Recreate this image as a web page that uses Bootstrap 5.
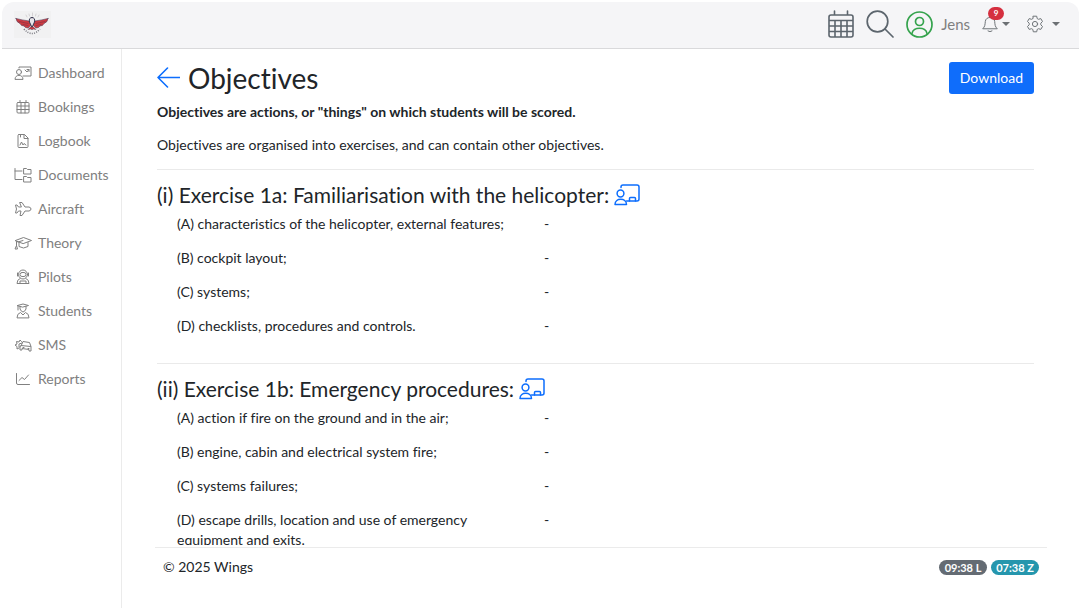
<!DOCTYPE html>
<html lang="en">
<head>
<meta charset="utf-8">
<meta name="viewport" content="width=device-width, initial-scale=1">
<title>Wings – Objectives</title>
<link rel="stylesheet" href="https://cdn.jsdelivr.net/npm/bootstrap@5.3.0/dist/css/bootstrap.min.css">
<style>
body { font-family: Lato, "Open Sans", sans-serif; font-size: 14px; line-height: 20px; color: #212529; background: #fff; font-variant-ligatures: none; }
svg { fill: none; stroke: currentColor; stroke-linecap: round; stroke-linejoin: round; flex: none; }
svg.wings-logo { stroke: none; }
.shell { padding: 2px 1px 0 2px; }
.topbar { background: #f5f5f7; border-bottom: 1px solid #d9d9db; border-radius: 12px 12px 0 0; height: 47px; padding: 0 15px 2px 12px; color: #6c757d; }
.topbar a, .topbar button { color: #6f7478; }
.topbar .dark-icon { color: #5c656d; }
.topbar .user { color: #808080; font-size: 15px; margin-right: 12px; }
.topbar .avatar { color: #35a34d; }
.topbar button { background: none; border: 0; padding: 0; }
.caret { border: 4px solid transparent; border-top-color: #6c7074; border-bottom: 0; }
.alerts { top: -8px; left: 6px; font-size: 8px; line-height: 13px; width: 16px; padding: 0; background: #d52f3f; }
.sidebar { width: 120px; border-right: 1px solid #ebebeb; padding: 12px 0 0 12px; }
.sidebar ul { gap: 10px; }
.sidebar a { color: #808080; font-size: 14px; line-height: 24px; gap: 6px; }
.sidebar svg { width: 18px; height: 16px; }
.content { padding: 13px 45px 0 35px; }
.content h1 { font-size: 28px; line-height: 30px; }
.content h2 { font-size: 21px; line-height: 26px; margin: 12px 0 6px; gap: 5px; }
.content p { margin-bottom: 14px; }
.content .intro { margin: 8px 0 13px; }
.content hr { margin: 0; border-color: #d8d8d8; opacity: .55; }
.content h1, .content h2 { font-weight: 400; }
.btn-download { background: #0f6dfb; color: #fff; border: 0; border-radius: 3px; font-size: 14px; line-height: 20px; padding: 6px 11px; }
.goals { margin: 0 -12px 0 8px; padding-bottom: 13px; }
.goals .row { --bs-gutter-x: 24px; margin: 0 0 14px; }
.footer-bar { margin: 2px 32px 0 33px; border-top: 1px solid #ebebeb; padding: 9px 8px 31px; }
.clock { font-size: 11px; line-height: 15px; padding: 0 5px; min-width: 48px; font-weight: 700; }
.clock-local { background: #646b73; }
.clock-zulu { background: #2596ad; }
</style>
</head>
<body>
<svg width="0" height="0" class="position-absolute" aria-hidden="true">
  <symbol id="i-lesson" viewBox="0 0 26 22">
    <g stroke-width="1.5"><path d="M7 3.500V3q0-2 2-2h14q2 0 2 2v12q0 2-2 2h-10.500"/><circle cx="6.500" cy="9.500" r="3.400"/><path d="M1 20.500c0-7 11.500-7 11.500 0zM15.500 17v-2.500q0-1 1-1h4q1 0 1 1V17"/></g>
  </symbol>
  <symbol id="i-calendar" viewBox="0 0 18 16">
    <path d="M4 3.500h10q1 0 1 1V13q0 1-1 1H4q-1 0-1-1V4.500q0-1 1-1zM3 7h12M3 10.500h12M7 3.500V14M11 3.500V14M6 1.500v2M12 1.500v2"/>
  </symbol>
</svg>

<div class="shell vh-100 d-flex flex-column overflow-hidden">
  <header class="topbar d-flex align-items-center flex-shrink-0">
    <a href="#" class="me-auto d-flex" aria-label="Wings home">
      <svg class="wings-logo" width="37" height="27" viewBox="0 0 37 27">
        <path fill="#f1f1f2" d="M0 0h37v27H0z"/>
        <path d="M12 4l1 2M15 3l.5 2M18.500 2v3M22 3l-.5 2M25 4l-1 2" stroke="#c9c5c8" stroke-width=".7"/>
        <path fill="#cf3a40" stroke="#54405a" stroke-width=".6" d="M2 7.500q6 1.500 13 2.500l2 4-3 3q-3 0-4-2-3 0-4-2.500Q2.500 11.500 2 7.500zM34 7.500q-6 1.500-13 2.500l-2 4 3 3q3 0 4-2 3 0 4-2.500 3.500-1 4-5z"/>
        <path d="M5 10.500l9 2M9 13.500l5 1M31 10.500l-9 2M27 13.500l-5 1" stroke="#7b3448" stroke-width=".6"/>
        <path fill="#e8e6ea" stroke="#373850" d="M18 6.500q-3.500 0-2.500 4.500l2.500 5.500 2.500-5.500q1-4.500-2.500-4.500z"/>
        <path fill="#cf3a40" stroke="#373850" stroke-width=".4" d="M17 15.500l-3 3 3-.5 1 1 1-1 3 .5-3-3-1 1z"/>
        <path d="M10 18q8 9 16 0" stroke="#77777f" stroke-width="1.600" stroke-dasharray="1 1.300" stroke-linecap="butt"/>
      </svg>
    </a>
    <a href="#" class="dark-icon d-flex" aria-label="Calendar">
      <svg width="26" height="28" viewBox="0 0 26 28" stroke-width="1.600"><path d="M3 5h20q2 0 2 2v18q0 2-2 2H3q-2 0-2-2V7q0-2 2-2zM1 10.500h24M1 16h24M1 21.500h24M7 10.500V27M13 10.500V27M19 10.500V27M6.500 1v4M19.500 1v4"/></svg>
    </a>
    <a href="#" class="dark-icon d-flex ms-2 ps-1" aria-label="Search">
      <svg width="28" height="28" viewBox="0 0 28 28" stroke-width="1.700"><circle cx="11.500" cy="11.500" r="10.300"/><path d="M19 19l8 8"/></svg>
    </a>
    <a href="#" class="user d-flex align-items-center text-decoration-none ms-2 ps-1">
      <svg class="avatar me-2" width="27" height="27" viewBox="0 0 27 27" stroke-width="1.700"><circle cx="13.500" cy="13.500" r="12.500"/><circle cx="13.500" cy="10.500" r="4"/><path d="M6 22.500c1-7 14-7 15 0"/></svg>
      Jens
    </a>
    <button type="button" class="d-flex align-items-center position-relative" aria-label="Notifications">
      <svg width="16" height="18" viewBox="0 0 16 18"><path d="M1 13.500c2-2 2-3.500 2.300-7C3.500 4 5.500 2.500 8 2.500s4.500 1.500 4.700 4c.3 3.500.3 5 2.300 7zM8 1v1.500M6 16q2 1.500 4 0"/></svg>
      <span class="badge rounded-pill position-absolute alerts">9</span>
      <span class="caret ms-1"></span>
    </button>
    <button type="button" class="d-flex align-items-center ms-3" aria-label="Settings">
      <svg width="18" height="18" viewBox="0 0 18 18"><circle cx="9" cy="9" r="2.600"/><path d="M7.300 1.200h3.400l.5 2.400 1.300.7 2.300-.7 1.700 2.900-1.700 1.700v1.600l1.700 1.700-1.700 2.900-2.300-.7-1.300.7-.5 2.400H7.300l-.5-2.400-1.300-.7-2.300.7-1.700-2.900 1.700-1.700V8.200L1.500 6.500l1.700-2.900 2.300.7 1.300-.7z"/></svg>
      <span class="caret ms-2 me-1"></span>
    </button>
  </header>

  <div class="d-flex flex-grow-1 overflow-hidden">
    <nav class="sidebar flex-shrink-0" aria-label="Main">
      <ul class="list-unstyled d-flex flex-column mb-0">
        <li><a href="#" class="d-flex align-items-center text-decoration-none"><svg viewBox="0 0 18 16"><path d="M5 3V2h12v9H9M11 5l2 2 2-2.500M13 4.500h2v2M1 14c0-5 8-5 8 0z"/><circle cx="5" cy="7" r="2.500"/></svg>Dashboard</a></li>
        <li><a href="#" class="d-flex align-items-center text-decoration-none"><svg viewBox="0 0 18 16"><use href="#i-calendar"/></svg>Bookings</a></li>
        <li><a href="#" class="d-flex align-items-center text-decoration-none"><svg viewBox="0 0 18 16"><path d="M5 1.500h5.500l3.500 3.500V13.500q0 1-1 1H5q-1 0-1-1v-11q0-1 1-1zM10 1.500V5.500h4M6 12l1.500-3 1.500 3 1-1.500 2 1.500M6.500 2v2"/></svg>Logbook</a></li>
        <li><a href="#" class="d-flex align-items-center text-decoration-none"><svg viewBox="0 0 18 16"><path d="M1 1.500v11h7M1 4h7M10 1.500h2.500l1 1H17v4.500h-7zM10 9.500h2.500l1 1H17V15h-7z"/></svg>Documents</a></li>
        <li><a href="#" class="d-flex align-items-center text-decoration-none"><svg viewBox="0 0 18 16"><path d="M6 1.500h2L11 6h4q2 .5 2 2t-2 2h-4l-3 4.500H6L7 10H4.500L3 12H1.500L2.500 8l-1-4H3l1.500 2H7z"/></svg>Aircraft</a></li>
        <li><a href="#" class="d-flex align-items-center text-decoration-none"><svg viewBox="0 0 18 16"><path d="M1.500 5.500L9.500 2.500l8 3-8 3zM5 7.500v4q4.500 3 9 0v-4M2.500 6.500v4l-1.500 3.500h2.500l-1-3.500M9 5.500l-5 1.500"/></svg>Theory</a></li>
        <li><a href="#" class="d-flex align-items-center text-decoration-none"><svg viewBox="0 0 18 16"><circle cx="9" cy="5.500" r="4.500"/><rect x="6" y="3.500" width="6" height="4" rx="2"/><path d="M3.500 4v3M14.500 4v3M6 9.500q-3 1-3 5h12q0-4-3-5M6 14v-2h6v2"/></svg>Pilots</a></li>
        <li><a href="#" class="d-flex align-items-center text-decoration-none"><svg viewBox="0 0 18 16"><path d="M3.500 2.500L9 1l5.500 1.500L9 4zM4 3v4M6 3.500V6q3 6 6 0V3.500M3 14.500q0-4 3.500-5L9 12l2.500-2.500q3.500 1 3.500 5z"/></svg>Students</a></li>
        <li><a href="#" class="d-flex align-items-center text-decoration-none"><svg viewBox="0 0 18 16"><path d="M5 11l-2 1V9.500L1 8l2-1-.5-2.500L5 5l1-2 1.500 1.500M7 9l2-4.500 6.500 1L17 9.500V14h-2v-1.500l-7-1V13H6v-3.500zM7 8.500l9.500 1M9 10.500h1M14 11.500h1M8 6L5 7v3"/></svg>SMS</a></li>
        <li><a href="#" class="d-flex align-items-center text-decoration-none"><svg viewBox="0 0 18 16"><path d="M2.500 2.500V12q0 1.500 1.500 1.500h11.500M5 9.500l3-3 2.500 2L14.500 4"/></svg>Reports</a></li>
      </ul>
    </nav>

    <div class="d-flex flex-column flex-grow-1 overflow-hidden">
      <main class="content flex-grow-1 overflow-hidden">
        <div class="d-flex justify-content-between align-items-center">
          <h1 class="d-flex align-items-center mb-0">
            <a href="#" class="d-flex me-2" aria-label="Back"><svg width="23" height="22" viewBox="0 0 23 22" stroke-width="1.600"><path d="M22.500 10.500H1M10.500 1L1 10.500l9.500 9.500"/></svg></a>Objectives
          </h1>
          <button type="button" class="btn btn-download">Download</button>
        </div>
        <p class="intro fw-bold">Objectives are actions, or "things" on which students will be scored.</p>
        <p>Objectives are organised into exercises, and can contain other objectives.</p>
        <hr>
        <section>
          <h2 class="d-flex align-items-center">(i) Exercise 1a: Familiarisation with the helicopter: <a href="#" class="d-flex" aria-label="Lesson"><svg width="26" height="22"><use href="#i-lesson"/></svg></a></h2>
          <div class="goals">
            <div class="row"><div class="col-5">(A) characteristics of the helicopter, external features;</div><div class="col">-</div></div>
            <div class="row"><div class="col-5">(B) cockpit layout;</div><div class="col">-</div></div>
            <div class="row"><div class="col-5">(C) systems;</div><div class="col">-</div></div>
            <div class="row"><div class="col-5">(D) checklists, procedures and controls.</div><div class="col">-</div></div>
          </div>
        </section>
        <hr>
        <section>
          <h2 class="d-flex align-items-center">(ii) Exercise 1b: Emergency procedures: <a href="#" class="d-flex" aria-label="Lesson"><svg width="26" height="22"><use href="#i-lesson"/></svg></a></h2>
          <div class="goals">
            <div class="row"><div class="col-5">(A) action if fire on the ground and in the air;</div><div class="col">-</div></div>
            <div class="row"><div class="col-5">(B) engine, cabin and electrical system fire;</div><div class="col">-</div></div>
            <div class="row"><div class="col-5">(C) systems failures;</div><div class="col">-</div></div>
            <div class="row"><div class="col-5">(D) escape drills, location and use of emergency equipment and exits.</div><div class="col">-</div></div>
          </div>
        </section>
      </main>
      <footer class="footer-bar d-flex justify-content-between align-items-center">
        <span>© 2025 Wings</span>
        <span class="d-flex gap-1"><span class="badge rounded-pill clock clock-local">09:38 L</span><span class="badge rounded-pill clock clock-zulu">07:38 Z</span></span>
      </footer>
    </div>
  </div>
</div>
<script src="https://cdn.jsdelivr.net/npm/bootstrap@5.3.0/dist/js/bootstrap.bundle.min.js"></script>
</body>
</html>
